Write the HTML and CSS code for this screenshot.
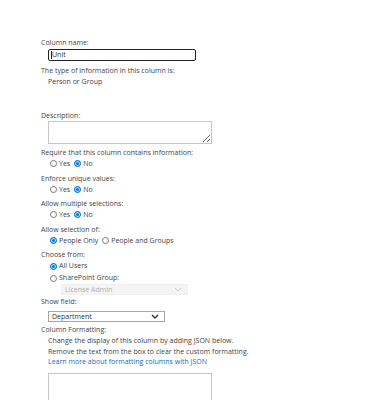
FILE: index.html
```html
<!DOCTYPE html>
<html lang="en">

<head>
  <meta charset="UTF-8">
  <title>Edit Column</title>
  <link rel="stylesheet" href="styles.css">
</head>

<body>
  <div class="form">
    <div class="label">Column name:</div>
    <div class="indent">
      <div class="text-input focused"><span class="caret"></span>Unit</div>
    </div>
    <div class="label">The type of information in this column is:</div>
    <div class="indent line">Person or Group</div>

    <div class="label spaced">Description:</div>
    <div class="indent">
      <textarea class="box small"></textarea>
    </div>

    <div class="label">Require that this column contains information:</div>
    <div class="indent radios">
      <label><input type="radio" name="req"> Yes</label>
      <label><input type="radio" name="req" checked> No</label>
    </div>

    <div class="label">Enforce unique values:</div>
    <div class="indent radios">
      <label><input type="radio" name="uniq"> Yes</label>
      <label><input type="radio" name="uniq" checked> No</label>
    </div>

    <div class="label">Allow multiple selections:</div>
    <div class="indent radios">
      <label><input type="radio" name="multi"> Yes</label>
      <label><input type="radio" name="multi" checked> No</label>
    </div>

    <div class="label">Allow selection of:</div>
    <div class="indent radios">
      <label><input type="radio" name="sel" checked> People Only</label>
      <label><input type="radio" name="sel"> People and Groups</label>
    </div>

    <div class="label">Choose from:</div>
    <div class="indent radios column">
      <label><input type="radio" name="from" checked> All Users</label>
      <label><input type="radio" name="from"> SharePoint Group:</label>
      <div class="dropdown disabled">
        <span>License Admin</span>
        <svg width="8" height="5" viewBox="0 0 8 5"><path d="M1 1l3 3 3-3" fill="none" stroke="#c8c8c8" stroke-width="1"/></svg>
      </div>
    </div>

    <div class="label">Show field:</div>
    <div class="indent">
      <div class="dropdown field">
        <span>Department</span>
        <svg width="8" height="5" viewBox="0 0 8 5"><path d="M1 1l3 3 3-3" fill="none" stroke="#333" stroke-width="1.4"/></svg>
      </div>
    </div>

    <div class="label">Column Formatting:</div>
    <div class="indent help">
      <div>Change the display of this column by adding JSON below.</div>
      <div>Remove the text from the box to clear the custom formatting.</div>
      <a href="#">Learn more about formatting columns with JSON</a>
    </div>
    <div class="indent">
      <textarea class="box large"></textarea>
    </div>
  </div>
</body>

</html>
```

FILE: styles.css
```css
body {
  margin: 0;
  padding: 0;
  background: #ffffff;
  font-family: 'Open Sans', 'Noto Sans', sans-serif;
  font-size: 7px;
  color: #333333;
}

.form {
  padding: 37px 0 0 41px;
  line-height: 11px;
}

.label {
  color: #444444;
}

.label.spaced {
  margin-top: 23px;
}

.indent {
  padding-left: 7px;
}

.line {
  color: #444444;
}

.text-input {
  display: flex;
  align-items: center;
  width: 144px;
  height: 10px;
  margin: 1px 0 4px;
  border: 1.5px solid #222222;
  border-radius: 2px;
  padding: 0 0 0 2px;
  line-height: 10px;
  color: #333333;
}

.caret {
  width: 1px;
  height: 8px;
  background: #222222;
}

.box {
  display: block;
  box-sizing: border-box;
  width: 164px;
  border: 1px solid #c6c6c6;
  margin: 0;
  padding: 0;
  font: inherit;
}

.box.small {
  height: 23px;
  margin: 0 0 3px;
}

.box.large {
  height: 40px;
  margin-top: 5px;
}

.radios {
  display: flex;
  gap: 4px;
  padding-left: 9px;
  margin-bottom: 3px;
  line-height: 11.5px;
}

.radios.column {
  flex-direction: column;
  gap: 0;
  margin-bottom: 1px;
  line-height: 12px;
}

.radios label {
  display: flex;
  align-items: center;
  gap: 2px;
  color: #444444;
}

.radios input {
  appearance: none;
  width: 7px;
  height: 7px;
  margin: 0;
  border: 1px solid #777777;
  border-radius: 50%;
  box-sizing: border-box;
  background: #ffffff;
}

.radios input:checked {
  border-color: #0078d4;
  background: #0078d4;
  box-shadow: inset 0 0 0 1px #cfe4f6;
}

.dropdown {
  display: flex;
  align-items: center;
  justify-content: space-between;
  box-sizing: border-box;
  height: 11px;
  padding: 0 5px 0 3px;
  line-height: 10px;
}

.dropdown.disabled {
  width: 127px;
  margin: 0 0 0 11px;
  background: #f4f4f4;
  border: 1px solid #f0f0f0;
  color: #b0b0b0;
}

.dropdown.field {
  width: 117px;
  margin: 4px 0 2px;
  border: 1px solid #a6a6a6;
  color: #333333;
}

.help {
  color: #444444;
  margin-top: 1px;
}

.help div,
.help a {
  display: block;
  line-height: 10.5px;
}

.help a {
  color: #106ebe;
  text-decoration: none;
}
```
